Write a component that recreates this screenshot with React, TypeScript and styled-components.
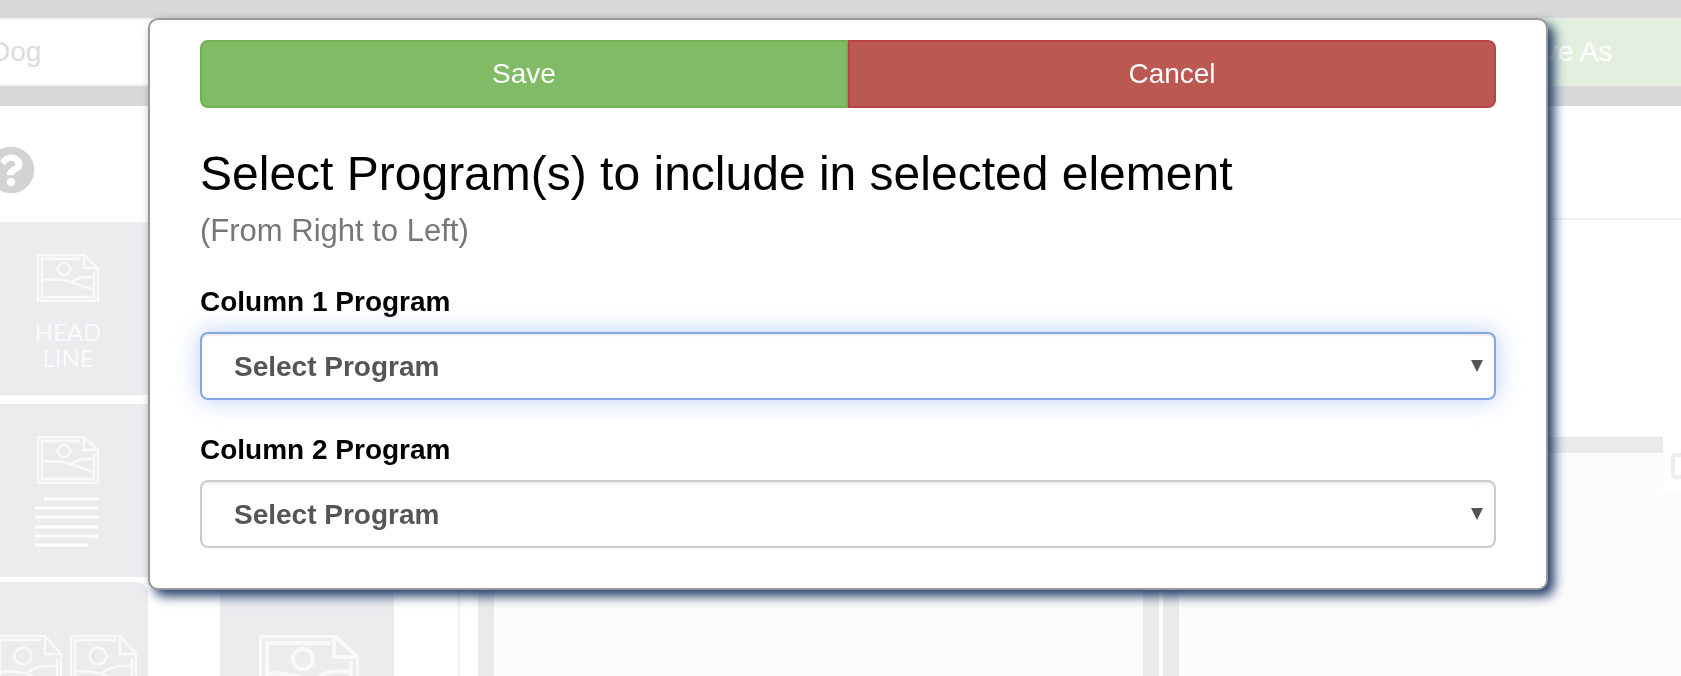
import React from "react";
import styled, { createGlobalStyle, css } from "styled-components";
import { FaQuestionCircle } from "react-icons/fa";

const GlobalStyle = createGlobalStyle`
  *, *::before, *::after { box-sizing: border-box; }
  body {
    margin: 0;
    background: #fff;
    color: #000;
    font-family: "Liberation Sans", Arial, sans-serif;
  }
  button, input, select { font-family: inherit; }
`;

/* ---------- Faded editor behind the dialog ---------- */

const Page = styled.div`
  display: flex;
  flex-direction: column;
  height: 100vh;
  overflow: hidden;
`;

const TopBar = styled.header`
  display: flex;
  flex: none;
  padding: 18px 0 20px;
  background: #d8d8d8;
`;

const NameInput = styled.input`
  flex: 1;
  min-width: 0;
  height: 68px;
  margin-left: -40px;
  padding: 0 28px;
  border: 2px solid #f3f3f3;
  background: #fff;
  color: #dcdcdc;
  font-size: 28px;
`;

const SaveAsButton = styled.button`
  flex: none;
  width: 240px;
  height: 68px;
  padding: 0;
  border: 0;
  background: #e3f0df;
  color: #fff;
  font-size: 28px;
`;

const Workspace = styled.div`
  display: flex;
  flex: 1;
  min-height: 0;
`;

const Sidebar = styled.aside`
  flex: none;
  width: 460px;
  overflow: hidden;
  border-right: 2px solid #f2f2f2;
`;

const HelpButton = styled.button`
  display: block;
  width: 48px;
  height: 48px;
  margin: 40px 0 28px -13px;
  padding: 0;
  border: 0;
  background: none;
  color: #d3d3d3;
`;

const TileRow = styled.div<{ $gap: number }>`
  display: flex;
  gap: 72px;
  margin: 0 0 ${(p) => p.$gap}px -12px;
`;

const Tile = styled.div<{ $width: number; $top: number; $round?: boolean }>`
  display: flex;
  flex: none;
  flex-direction: column;
  align-items: center;
  width: ${(p) => p.$width}px;
  height: 173px;
  padding-top: ${(p) => p.$top}px;
  border-radius: ${(p) => (p.$round ? "0 12px 0 0" : "0")};
  background: #ebecee;
`;

const TileText = styled.span`
  margin-top: 17px;
  color: #f9fafb;
  font-family: Lato, sans-serif;
  font-size: 24px;
  line-height: 26px;
  text-align: center;
`;

const Lines = styled.svg`
  display: block;
  margin: 12px 4px 0 0;
`;

const Pair = styled.div`
  display: flex;
  gap: 8px;
  margin-right: 4px;
`;

const Main = styled.main`
  display: flex;
  flex: 1;
  flex-direction: column;
  min-width: 0;
`;

const ToolStrip = styled.div`
  flex: none;
  height: 114px;
  border-bottom: 2px solid #f2f2f2;
`;

const Canvas = styled.div`
  position: relative;
  display: grid;
  flex: 1;
  grid-template-columns: 681fr 518fr;
  gap: 4px;
  margin: 217px 0 0 18px;
`;

const CanvasCell = styled.div<{ $open?: boolean }>`
  border: 16px solid #e9ebea;
  border-bottom: 0;
  ${(p) => p.$open && css`border-right: 0;`}
  background: #fcfcfc;
`;

const CanvasTab = styled.div`
  position: absolute;
  top: 0;
  right: 0;
  width: 18px;
  height: 56px;
  padding: 16px 0 0 8px;
  overflow: hidden;
  background: #fff;
`;

const TabBox = styled.div`
  width: 26px;
  height: 26px;
  border: 4px solid #ededed;
  border-radius: 4px;
`;

interface PictureShape {
  width: number;
  height: number;
  foldX: number;
  foldY: number;
  sun: [number, number, number];
  ground: string;
}

const smallPicture: PictureShape = {
  width: 62,
  height: 48,
  foldX: 14,
  foldY: 14,
  sun: [27, 15, 6],
  ground: "M5 25.5H20C33 25.5 42 32 57 35.5M35 28C42 22 49 23 57 23",
};

const mediumPicture: PictureShape = {
  width: 67,
  height: 66,
  foldX: 16,
  foldY: 19,
  sun: [28, 21, 8.5],
  ground: "M5 36.5H15C31 36 43 45 61 50M32 38C43 30 50 31 61 31",
};

const largePicture: PictureShape = {
  width: 100,
  height: 80,
  foldX: 24,
  foldY: 22,
  sun: [44, 24, 10],
  ground: "M8 38.5C38 37 58 48 92 58M60 42C70 35 80 36 92 37",
};

const PictureSvg = styled.svg<{ $shift?: boolean }>`
  display: block;
  flex: none;
  ${(p) => p.$shift && css`margin-left: 4px;`}
`;

function Picture({ shape, shift }: { shape: PictureShape; shift?: boolean }) {
  const { width: w, height: h, foldX, foldY, sun, ground } = shape;
  const inset = w > 90 ? 8 : 5;
  const right = w - 1;
  const bottom = h - 1;
  return (
    <PictureSvg
      $shift={shift}
      width={w}
      height={h}
      viewBox={`0 0 ${w} ${h}`}
      fill="none"
      stroke="#f8f9fa"
      strokeWidth={w > 90 ? 4 : 2.4}
      aria-hidden="true"
    >
      <path d={`M1 1H${right - foldX}L${right} ${foldY}V${bottom}H1Z`} />
      <path d={`M${right - foldX} 1V${foldY}H${right}`} />
      <path d={`M${right - foldX - 4} ${inset}H${inset}V${h - inset}H${w - inset}V${foldY + 4}`} />
      <circle cx={sun[0]} cy={sun[1]} r={sun[2]} />
      <path d={ground} />
    </PictureSvg>
  );
}

/* ---------- Dialog ---------- */

const Overlay = styled.div`
  position: fixed;
  inset: 0;
  display: flex;
  align-items: flex-start;
  padding: 18px 133px 0 148px;
`;

const Dialog = styled.form`
  flex: 1;
  min-width: 0;
  padding: 20px 50px 40px;
  border: 2px solid #999;
  border-radius: 10px;
  background: #fff;
  box-shadow: 6px 6px 12px #1c3765;
`;

const ButtonGroup = styled.div`
  display: flex;
`;

const ActionButton = styled.button<{ $tone: "save" | "cancel" }>`
  flex: 1;
  height: 68px;
  padding: 0;
  color: #fff;
  font-size: 28px;
  ${(p) =>
    p.$tone === "save"
      ? css`
          border: 2px solid #70b155;
          border-radius: 8px 0 0 8px;
          background: #81bb65;
        `
      : css`
          border: 2px solid #b64441;
          border-radius: 0 8px 8px 0;
          background: #bb5852;
        `}
`;

const Title = styled.h1`
  margin: 40px 0 14px;
  font-size: 48px;
  font-weight: 400;
  line-height: 52px;
`;

const Subtitle = styled.p`
  margin: 0 0 34px;
  color: #777;
  font-size: 31px;
  line-height: 34px;
`;

const Fields = styled.div`
  display: flex;
  flex-direction: column;
  gap: 30px;
`;

const Label = styled.label`
  display: block;
  margin-bottom: 10px;
  font-size: 28px;
  font-weight: 700;
  line-height: 40px;
`;

const SelectWrap = styled.div`
  position: relative;
`;

const Select = styled.select<{ $active?: boolean }>`
  display: block;
  width: 100%;
  height: 68px;
  padding: 0 32px;
  appearance: none;
  border: 2px solid ${(p) => (p.$active ? "#84a8e6" : "#ccc")};
  border-radius: 8px;
  outline: 0;
  background: #fff;
  box-shadow: inset 0 2px 2px rgba(0, 0, 0, 0.075)
    ${(p) => p.$active && ", 0 0 24px rgba(102, 150, 230, 0.45)"};
  color: #555;
  font-size: 28px;
  font-weight: 700;
`;

const Arrow = styled.svg`
  position: absolute;
  top: 28px;
  right: 13px;
  pointer-events: none;
`;

function ProgramField({ id, label, active }: { id: string; label: string; active?: boolean }) {
  return (
    <div>
      <Label htmlFor={id}>{label}</Label>
      <SelectWrap>
        <Select id={id} $active={active}>
          <option>Select Program</option>
        </Select>
        <Arrow width="12" height="12" viewBox="0 0 12 12" aria-hidden="true">
          <path d="M0 0H12L6 12Z" fill="#555" />
        </Arrow>
      </SelectWrap>
    </div>
  );
}

export default function App() {
  return (
    <>
      <GlobalStyle />
      <Page>
        <TopBar>
          <NameInput aria-label="Name" defaultValue="Dog" />
          <SaveAsButton type="button">Save As</SaveAsButton>
        </TopBar>
        <Workspace>
          <Sidebar>
            <HelpButton type="button" aria-label="Help">
              <FaQuestionCircle size={48} />
            </HelpButton>
            <TileRow $gap={9}>
              <Tile $width={160} $top={32}>
                <Picture shape={smallPicture} />
                <TileText>
                  HEAD
                  <br />
                  LINE
                </TileText>
              </Tile>
            </TileRow>
            <TileRow $gap={5}>
              <Tile $width={160} $top={32}>
                <Picture shape={smallPicture} />
                <Lines width="63" height="54" viewBox="0 0 63 54" stroke="#fdfdfe" strokeWidth="3" aria-hidden="true">
                  <path d="M9 3H63M0 12H63M0 21H63M0 31H63M0 40H63M0 49H53" />
                </Lines>
              </Tile>
            </TileRow>
            <TileRow $gap={0}>
              <Tile $width={160} $top={53} $round>
                <Pair>
                  <Picture shape={mediumPicture} />
                  <Picture shape={mediumPicture} />
                </Pair>
              </Tile>
              <Tile $width={174} $top={53}>
                <Picture shape={largePicture} shift />
              </Tile>
            </TileRow>
          </Sidebar>
          <Main>
            <ToolStrip />
            <Canvas>
              <CanvasCell />
              <CanvasCell $open />
              <CanvasTab>
                <TabBox />
              </CanvasTab>
            </Canvas>
          </Main>
        </Workspace>
      </Page>
      <Overlay>
        <Dialog role="dialog" aria-labelledby="dialog-title" onSubmit={(e: React.FormEvent) => e.preventDefault()}>
          <ButtonGroup>
            <ActionButton type="submit" $tone="save">Save</ActionButton>
            <ActionButton type="button" $tone="cancel">Cancel</ActionButton>
          </ButtonGroup>
          <Title id="dialog-title">Select Program(s) to include in selected element</Title>
          <Subtitle>(From Right to Left)</Subtitle>
          <Fields>
            <ProgramField id="column-1" label="Column 1 Program" active />
            <ProgramField id="column-2" label="Column 2 Program" />
          </Fields>
        </Dialog>
      </Overlay>
    </>
  );
}
